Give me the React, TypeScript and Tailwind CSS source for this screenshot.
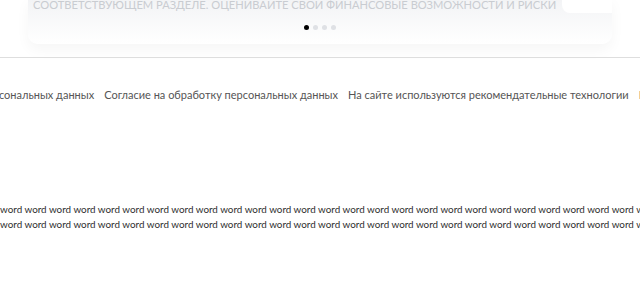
const links = [
  "Политика обработки персональных данных",
  "Согласие на обработку персональных данных",
  "На сайте используются рекомендательные технологии",
  "Реквизиты",
];

const words = Array.from({ length: 60 }, () => "word").join(" ");

export default function App() {
  return (
    <div className="h-[286px] w-[640px] overflow-hidden bg-white font-['Lato','Noto_Sans',sans-serif]">
      {/* slider card, scrolled so only its bottom shows */}
      <div className="mx-[28px] -mt-[3px] rounded-b-[10px] bg-gradient-to-b from-[#f2f3f5] to-white pb-[14px] shadow-[0_6px_14px_rgba(0,0,0,0.04)]">
        <div className="flex items-start gap-[6px] pl-[5px]">
          <div className="min-w-0 flex-1 overflow-hidden whitespace-nowrap text-[11.15px] leading-[16px] text-[#c9ccd1]">
            СООТВЕТСТВУЮЩЕМ РАЗДЕЛЕ. ОЦЕНИВАЙТЕ СВОИ ФИНАНСОВЫЕ ВОЗМОЖНОСТИ И РИСКИ
          </div>
          <div className="h-[16px] w-[50px] shrink-0 rounded-bl-[8px] bg-white" />
        </div>
        <div className="mt-[12px] flex justify-center gap-[4px]">
          <span className="h-[5px] w-[5px] rounded-full bg-black" />
          <span className="h-[5px] w-[5px] rounded-full bg-[#dfe1e5]" />
          <span className="h-[5px] w-[5px] rounded-full bg-[#dfe1e5]" />
          <span className="h-[5px] w-[5px] rounded-full bg-[#dfe1e5]" />
        </div>
      </div>

      <div className="mt-[13px] border-t border-[#dedede]" />

      <nav className="mt-[29px] flex whitespace-nowrap text-[11px] leading-[16px] text-[#555]">
        <div className="-ml-[129px] flex gap-[10px]">
          {links.map((l) => (
            <a key={l} className="shrink-0">
              {l}
            </a>
          ))}
        </div>
      </nav>

      <div className="mt-[99px] overflow-hidden text-[9.85px] leading-[15px] text-[#2e2e2e]">
        <div className="whitespace-nowrap">{words}</div>
        <div className="whitespace-nowrap">{words}</div>
      </div>
    </div>
  );
}
